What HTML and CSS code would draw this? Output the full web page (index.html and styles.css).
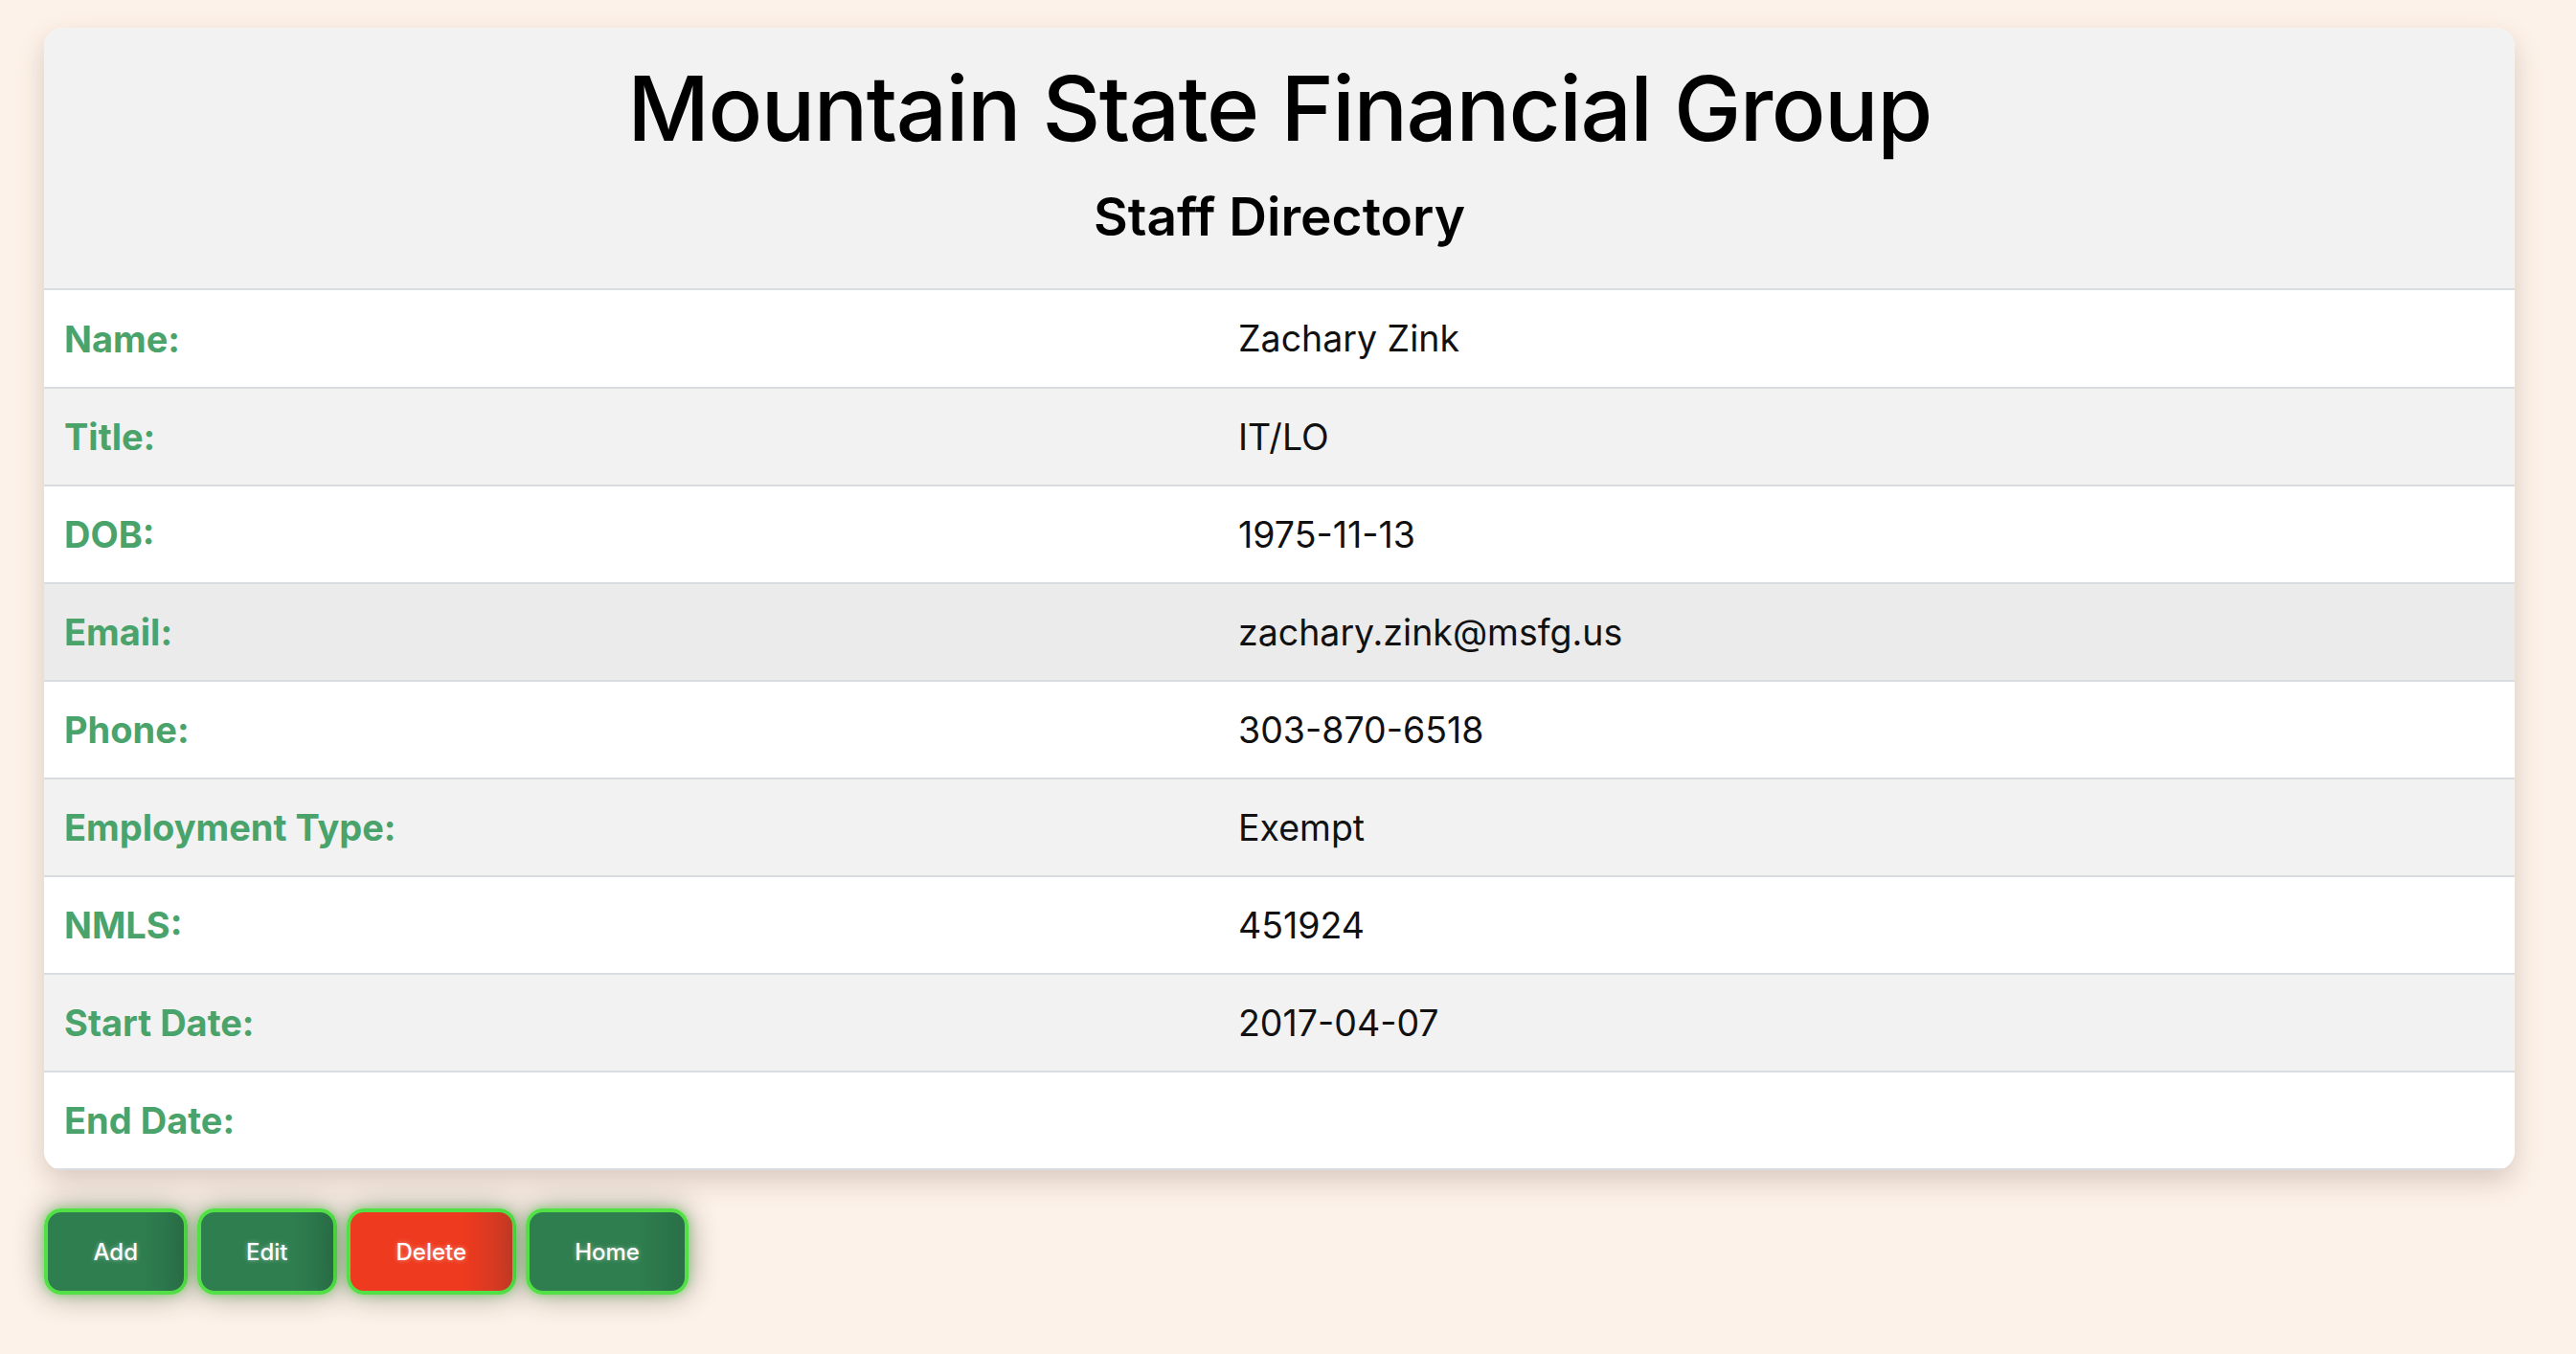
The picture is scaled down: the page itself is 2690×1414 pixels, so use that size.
FILE: index.html
```html
<!DOCTYPE html>
<html lang="en">
<head>
<meta charset="utf-8">
<title>Staff Directory</title>
<link rel="stylesheet" href="styles.css">
</head>
<body>
<main class="page">
  <section class="card">
    <header class="card-header">
      <h1 class="title">Mountain State Financial Group</h1>
      <h2 class="subtitle">Staff Directory</h2>
    </header>
    <table class="details">
      <colgroup><col class="col-label"><col></colgroup>
      <tbody>
        <tr><th>Name:</th><td>Zachary Zink</td></tr>
        <tr class="alt"><th>Title:</th><td>IT/LO</td></tr>
        <tr><th>DOB:</th><td>1975-11-13</td></tr>
        <tr class="hover"><th>Email:</th><td>zachary.zink@msfg.us</td></tr>
        <tr><th>Phone:</th><td>303-870-6518</td></tr>
        <tr class="alt"><th>Employment Type:</th><td>Exempt</td></tr>
        <tr><th>NMLS:</th><td>451924</td></tr>
        <tr class="alt"><th>Start Date:</th><td>2017-04-07</td></tr>
        <tr class="last"><th>End Date:</th><td></td></tr>
      </tbody>
    </table>
  </section>
  <nav class="actions">
    <button class="btn">Add</button>
    <button class="btn">Edit</button>
    <button class="btn btn-danger">Delete</button>
    <button class="btn">Home</button>
  </nav>
</main>
</body>
</html>
```

FILE: styles.css
```css
html, body {
  margin: 0;
  padding: 0;
}
body {
  background: #fdf2e9;
  font-family: Inter, "Noto Sans", "Liberation Sans", sans-serif;
  color: #111;
}
.page {
  padding: 29px 64px 40px 46px;
  display: flex;
  flex-direction: column;
  gap: 40px;
}
.card {
  background: #ffffff;
  border-radius: 20px;
  overflow: hidden;
  box-shadow: 0 12px 28px rgba(90, 60, 40, 0.22);
}
.card-header {
  background: #f2f2f2;
  border-bottom: 2px solid #d9dce1;
  height: 274px;
  box-sizing: border-box;
  display: flex;
  flex-direction: column;
  align-items: center;
  padding-top: 28px;
}
.title {
  margin: 0;
  font-size: 94px;
  font-weight: 500;
  line-height: 1.2;
  color: #000;
  letter-spacing: -1.5px;
}
.subtitle {
  margin: 0;
  font-size: 55px;
  font-weight: 600;
  line-height: 1.2;
  color: #000;
  margin-top: 23px;
}
.details {
  width: 100%;
  border-collapse: collapse;
  table-layout: fixed;
}
.col-label {
  width: 1226px;
}
.details tr {
  height: 102px;
  border-bottom: 2px solid #d9dce1;
  background: #ffffff;
}
.details tr.alt {
  background: #f2f2f2;
}
.details tr.hover {
  background: #ebebeb;
}
.details th,
.details td {
  padding: 0 21px;
  text-align: left;
  vertical-align: middle;
}
.details th {
  color: #4aa36b;
  font-weight: 700;
  font-size: 38px;
}
.details td {
  color: #111;
  font-weight: 400;
  font-size: 37.5px;
}
.actions {
  display: flex;
  gap: 10px;
}
.btn {
  height: 90px;
  padding: 0 47.5px;
  border: 4px solid #52e046;
  border-radius: 18px;
  background: linear-gradient(90deg, #2e7e4f 0%, #2e7e4f 70%, #2a6f48 100%);
  color: #ffffff;
  font-family: Inter, "Noto Sans", "Liberation Sans", sans-serif;
  font-size: 24px;
  font-weight: 500;
  text-shadow: 0 0 5px rgba(255, 255, 255, 0.45);
  box-shadow: 0 0 8px rgba(82, 224, 70, 0.55), 0 0 30px rgba(20, 40, 20, 0.45);
  cursor: pointer;
}
.btn-danger {
  background: linear-gradient(90deg, #ee3a1e 0%, #ee3a1e 70%, #c93a25 100%);
}
```
